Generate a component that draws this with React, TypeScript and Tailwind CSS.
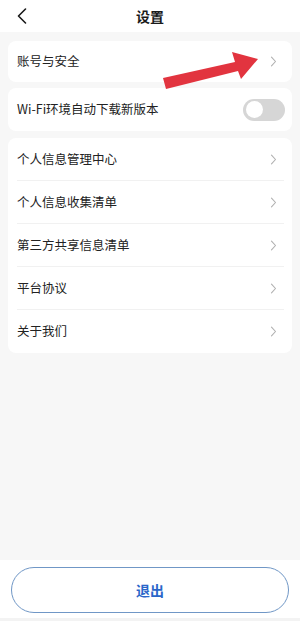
import React from 'react';

const Chevron: React.FC = () => (
  <svg width="7" height="11" viewBox="0 0 7 11" fill="none" className="shrink-0">
    <path d="M1.5 1.2 L5.5 5.5 L1.5 9.8" stroke="#b0b0b0" strokeWidth="1.1" strokeLinecap="round" strokeLinejoin="round" />
  </svg>
);

const Row: React.FC<{ label: string; last?: boolean }> = ({ label, last }) => (
  <div className="h-[43px] flex flex-col">
    <div className="flex-1 flex items-center justify-between pl-[9px] pr-[15px]">
      <span className="text-[12.5px] text-[#222]">{label}</span>
      <Chevron />
    </div>
    {!last && <div className="h-px bg-[#f1f1f1] ml-[9px] mr-[8px]" />}
  </div>
);

const items = ['个人信息管理中心', '个人信息收集清单', '第三方共享信息清单', '平台协议', '关于我们'];

export default function App() {
  return (
    <div
      className="relative w-full h-[621px] bg-[#f7f7f7] flex flex-col overflow-hidden"
      style={{ fontFamily: '"Noto Sans CJK SC", "Noto Sans", sans-serif' }}
    >
      {/* header */}
      <div className="h-[32px] bg-white grid grid-cols-[1fr_auto_1fr] items-center shrink-0">
        <div className="pl-[17px] flex items-center">
          <svg width="10" height="16" viewBox="0 0 10 16" fill="none">
            <path d="M8.5 1 L1.5 8 L8.5 15" stroke="#1a1a1a" strokeWidth="1.6" strokeLinecap="round" strokeLinejoin="round" />
          </svg>
        </div>
        <span className="text-[14px] font-bold text-[#1a1a1a]">设置</span>
        <div />
      </div>

      {/* list */}
      <div className="px-2 pt-[9px] flex flex-col">
        <div className="h-[41px] bg-white rounded-[8px] flex items-center justify-between pl-[9px] pr-[15px]">
          <span className="text-[12.5px] text-[#222]">账号与安全</span>
          <Chevron />
        </div>
        <div className="mt-[6px] h-[43px] bg-white rounded-[8px] flex items-center justify-between pl-[9px] pr-[7px]">
          <span className="text-[12.5px] text-[#222]">Wi-Fi环境自动下载新版本</span>
          <div className="w-[42px] h-[22px] rounded-full bg-[#d6d6d6] flex items-center pl-[3px]">
            <div className="w-[17px] h-[17px] rounded-full bg-white" />
          </div>
        </div>
        <div className="mt-[7px] bg-white rounded-[8px] flex flex-col">
          {items.map((label, i) => (
            <Row key={label} label={label} last={i === items.length - 1} />
          ))}
        </div>
      </div>

      <div className="flex-1" />

      {/* footer */}
      <div className="h-[58px] bg-white px-[11px] pt-[7px] shrink-0">
        <button className="w-full h-[46px] rounded-full border border-[#7097c6] text-[#2a66c9] text-[14px] font-bold flex items-center justify-center">
          退出
        </button>
      </div>
      <div className="h-[3px] bg-[#f3f3f3] shrink-0" />

      {/* red annotation arrow */}
      <svg className="absolute left-0 top-0 pointer-events-none" width="300" height="100" viewBox="0 0 300 100">
        <path
          d="M163 78 L235 62 L232 52 L258 59 L241 79 L238 71 L166 89 Z"
          fill="#e2343f"
        />
      </svg>
    </div>
  );
}
